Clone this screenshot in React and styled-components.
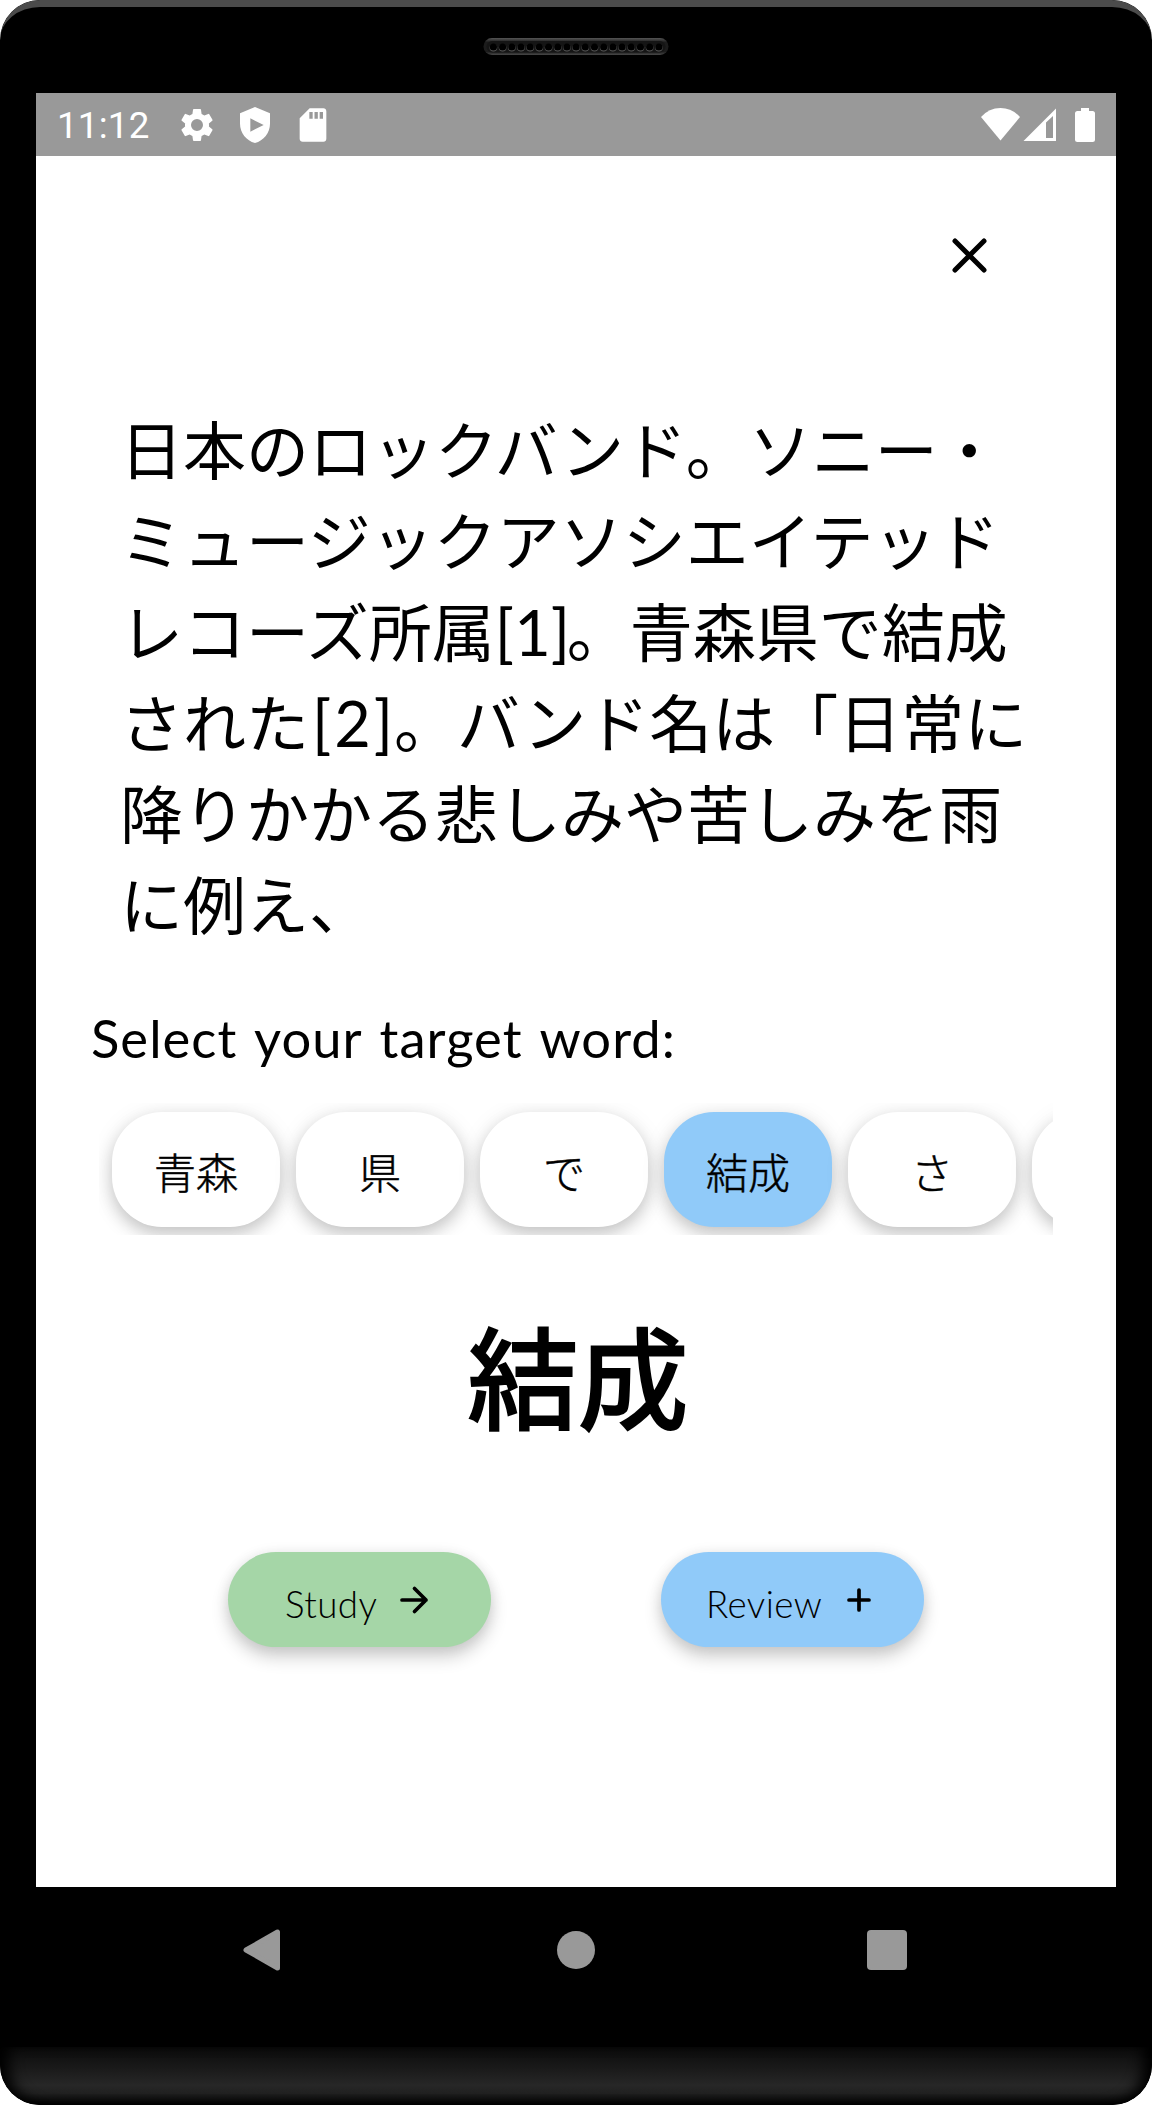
import React from "react";
import styled, { createGlobalStyle } from "styled-components";

const jp = `"Noto Sans CJK JP", sans-serif`;
const latin = `Lato, "Noto Sans CJK JP", sans-serif`;

const GlobalStyle = createGlobalStyle`
  *, *::before, *::after { box-sizing: border-box; }
  body { margin: 0; background: #fff; }
  svg { display: block; flex: none; }
`;

const Phone = styled.div`
  width: 1152px;
  height: 2105px;
  display: flex;
  flex-direction: column;
  background: #000;
  border-radius: 40px;
  overflow: hidden;
`;

const TopBezel = styled.div`
  height: 93px;
  flex: none;
  display: flex;
  justify-content: center;
  padding-top: 31px;
  border-top: 7px solid #4b4b4b;
  border-radius: 40px 40px 0 0;
`;

const Screen = styled.main`
  width: 1080px;
  height: 1794px;
  flex: none;
  margin: 0 auto;
  display: flex;
  flex-direction: column;
  background: #fff;
  color: #000;
`;

const StatusBar = styled.header`
  height: 63px;
  flex: none;
  display: flex;
  align-items: center;
  padding: 0 20px 0 21px;
  background: #999;
`;

const Clock = styled.span`
  width: 120px;
  font: 400 36.75px/63px Roboto, sans-serif;
  letter-spacing: 0.2px;
  color: #fff;
  padding-top: 2px;
`;

const Notices = styled.div`
  display: flex;
  gap: 18px;
`;

const Signals = styled.div`
  display: flex;
  align-items: center;
  margin-left: auto;
`;

const CloseRow = styled.div`
  height: 245px;
  flex: none;
  display: flex;
  justify-content: flex-end;
  padding: 80px 127px 0 0;
`;

const IconButton = styled.button`
  width: 39px;
  height: 39px;
  padding: 0;
  border: 0;
  background: none;
  color: #000;
`;

const Passage = styled.p`
  margin: 0 0 0 84px;
  font: 400 63px/91px ${jp};
`;

const Line = styled.span`
  display: block;
  height: 91px;
  white-space: nowrap;
`;

const Ref = styled.span`
  display: inline-block;
  width: ${(p) => p.$w}px;
  padding-left: ${(p) => p.$track}px;
  font-family: ${latin};
  line-height: 60px;
  text-align: center;
  letter-spacing: ${(p) => p.$track}px;
`;

const Prompt = styled.h2`
  margin: 56px 0 0 55px;
  height: 70px;
  font: 400 52.5px/70px ${latin};
  letter-spacing: 1.05px;
  word-spacing: 3.5px;
  white-space: nowrap;
`;

const WordStrip = styled.div`
  width: 954px;
  height: 132px;
  flex: none;
  margin: 30px 0 0 63px;
  padding: 9px 0 0 13px;
  display: flex;
  gap: 16px;
  overflow: hidden;
`;

const Chip = styled.button`
  width: 168px;
  height: 115px;
  flex: none;
  border: 0;
  border-radius: 50px;
  padding: 2px 0 0;
  background: ${(p) => (p.$selected ? "#90caf9" : "#fff")};
  color: #000;
  font: 300 42px/61px ${jp};
  -webkit-text-stroke: 0.5px #000;
  box-shadow: 0 7px 16px rgba(0, 0, 0, 0.18), 0 4px 26px rgba(0, 0, 0, 0.09);
`;

const Target = styled.h1`
  margin: 58px 0 0 4px;
  height: 160px;
  font: 400 110.25px/160px ${jp};
  -webkit-text-stroke: 2.8px #000;
  text-align: center;
`;

const Actions = styled.div`
  display: flex;
  gap: 170px;
  margin: 99px 0 0 192px;
`;

const Action = styled.button`
  width: 263px;
  height: 95px;
  display: flex;
  align-items: center;
  border: 0;
  border-radius: 47.5px;
  padding: 0 0 0 ${(p) => p.$inset}px;
  background: ${(p) => p.$color};
  color: #000;
  font: 300 36.75px/46px ${latin};
  box-shadow: 0 10px 17px rgba(0, 0, 0, 0.19), 0 1px 14px rgba(0, 0, 0, 0.08);
`;

const Label = styled.span`
  width: ${(p) => p.$w}px;
  padding-top: 8px;
  text-align: left;
  white-space: nowrap;
  letter-spacing: ${(p) => p.$track}px;
`;

const NavBar = styled.nav`
  height: 160px;
  flex: none;
  display: flex;
  justify-content: space-between;
  padding: 42px 245px 0 243px;
`;

const Chin = styled.div`
  height: 58px;
  flex: none;
  border-radius: 0 0 40px 40px;
  background: linear-gradient(#0c0c0c, #191919 35%, #272727 66%, #202020 80%, #000);
  box-shadow: inset 14px 0 14px -5px #000, inset -14px 0 14px -5px #000;
`;

const holes = Array.from({ length: 19 }, (_, i) => 10.4 + i * 9.19);
const words = ["青森", "県", "で", "結成", "さ", ""];

function Speaker() {
  return (
    <svg width="186" height="17" viewBox="0 0 186 17">
      <defs>
        <linearGradient id="grille" x1="0" y1="0" x2="0" y2="1">
          <stop offset="0" stopColor="#555" />
          <stop offset=".25" stopColor="#1c1c1c" />
          <stop offset=".8" stopColor="#1c1c1c" />
          <stop offset="1" stopColor="#484848" />
        </linearGradient>
      </defs>
      <rect x=".5" width="185" height="17" rx="8.5" fill="url(#grille)" />
      <rect x="3.5" y="3" width="179" height="11.5" rx="5.7" fill="#151515" />
      {holes.map((x) => (
        <g key={x}>
          <circle cx={x} cy="9.8" r="3.8" fill="#5a5a5a" />
          <circle cx={x} cy="9" r="3.6" fill="#000" />
        </g>
      ))}
    </svg>
  );
}

function Gear() {
  return (
    <svg width="40" height="40" viewBox="0 0 24 24" fill="#fff">
      <path d="M19.14 12.94c.04-.3.06-.61.06-.94s-.02-.64-.07-.94l2.03-1.58a.49.49 0 0 0 .12-.61l-1.92-3.32a.49.49 0 0 0-.59-.22l-2.39.96c-.5-.38-1.03-.7-1.62-.94l-.36-2.54a.48.48 0 0 0-.48-.41h-3.84a.48.48 0 0 0-.47.41l-.36 2.54c-.59.24-1.13.57-1.62.94l-2.39-.96a.48.48 0 0 0-.59.22L2.74 8.87a.48.48 0 0 0 .12.61l2.03 1.58c-.05.3-.09.63-.09.94s.02.64.07.94l-2.03 1.58a.49.49 0 0 0-.12.61l1.92 3.32c.12.22.37.29.59.22l2.39-.96c.5.38 1.03.7 1.62.94l.36 2.54c.05.24.24.41.48.41h3.84c.24 0 .44-.17.47-.41l.36-2.54c.59-.24 1.13-.56 1.62-.94l2.39.96c.22.08.47 0 .59-.22l1.92-3.32a.48.48 0 0 0-.12-.61zM12 15.6A3.6 3.6 0 1 1 12 8.4a3.6 3.6 0 0 1 0 7.2z" />
    </svg>
  );
}

function Shield() {
  return (
    <svg width="40" height="40" viewBox="0 0 24 24" fill="#fff" fillRule="evenodd">
      <path d="M12 1.2 3 4.9v6.4c0 5.3 3.8 10.3 9 11.5 5.2-1.2 9-6.2 9-11.5V4.9zM9.2 8v8l8-4z" />
    </svg>
  );
}

function SdCard() {
  return (
    <svg width="40" height="40" viewBox="0 0 24 24" fill="#fff" fillRule="evenodd">
      <path d="M18.3 2H10L4 8v12.2c0 1 .8 1.8 1.8 1.8h12.5c.9 0 1.7-.8 1.7-1.8V3.8c0-1-.8-1.8-1.7-1.8zM9.8 4.2h2v4h-2zm3.1 0h2v4h-2zm3.1 0h2v4h-2z" />
    </svg>
  );
}

export default function App() {
  return (
    <>
      <GlobalStyle />
      <Phone>
        <TopBezel>
          <Speaker />
        </TopBezel>
        <Screen>
          <StatusBar>
            <Clock>11:12</Clock>
            <Notices>
              <Gear />
              <Shield />
              <SdCard />
            </Notices>
            <Signals>
              <svg width="116" height="36" viewBox="0 0 116 36" fill="#fff">
                <path d="M1 10Q9 1 20.5 1T40 10L20.5 33.5z" />
                <path fillRule="evenodd" d="M43.5 34 76 1.5V34zM66 15.5V31h7V9z" />
                <path d="M101 1h8v3h3.5a2.5 2.5 0 0 1 2.5 2.5v26a2.5 2.5 0 0 1-2.5 2.5h-15a2.5 2.5 0 0 1-2.5-2.5v-26A2.5 2.5 0 0 1 97.5 4h3.5z" />
              </svg>
            </Signals>
          </StatusBar>
          <CloseRow>
            <IconButton aria-label="Close">
              <svg width="39" height="39" viewBox="0 0 39 39" stroke="#000" strokeWidth="5" strokeLinecap="round">
                <path d="M5 5 34 34M34 5 5 34" />
              </svg>
            </IconButton>
          </CloseRow>
          <Passage>
            <Line>日本のロックバンド。ソニー・</Line>
            <Line>ミュージックアソシエイテッド</Line>
            <Line>
              レコーズ所属<Ref $w={72} $track={0}>[1]</Ref>。青森県で結成
            </Line>
            <Line>
              された<Ref $w={85} $track={3}>[2]</Ref>。バンド名は「日常に
            </Line>
            <Line>降りかかる悲しみや苦しみを雨</Line>
            <Line>に例え、</Line>
          </Passage>
          <Prompt>Select your target word:</Prompt>
          <WordStrip>
            {words.map((w) => (
              <Chip key={w} $selected={w === "結成"}>
                {w}
              </Chip>
            ))}
          </WordStrip>
          <Target>結成</Target>
          <Actions>
            <Action $color="#a5d6a7" $inset={57}>
              <Label $w={114} $track={0.4}>Study</Label>
              <svg width="30" height="30" viewBox="0 0 30 30" fill="none" stroke="#000" strokeWidth="3.7" strokeLinecap="round" strokeLinejoin="round">
                <path d="M3 15h24M15.5 3.5 27 15 15.5 26.5" />
              </svg>
            </Action>
            <Action $color="#90caf9" $inset={45}>
              <Label $w={138} $track={0.4}>Review</Label>
              <svg width="30" height="30" viewBox="0 0 30 30" stroke="#000" strokeWidth="3.7" strokeLinecap="round">
                <path d="M5 15h20M15 5v20" />
              </svg>
            </Action>
          </Actions>
        </Screen>
        <NavBar>
          <svg width="38" height="42" viewBox="0 0 38 42">
            <path d="M3 21 34.5 3v36z" fill="#999" stroke="#999" strokeWidth="5" strokeLinejoin="round" />
          </svg>
          <svg width="42" height="42" viewBox="0 0 42 42">
            <circle cx="23" cy="21" r="19" fill="#999" />
          </svg>
          <svg width="40" height="42" viewBox="0 0 40 42">
            <rect y="1" width="40" height="40" rx="4" fill="#999" />
          </svg>
        </NavBar>
        <Chin />
      </Phone>
    </>
  );
}
